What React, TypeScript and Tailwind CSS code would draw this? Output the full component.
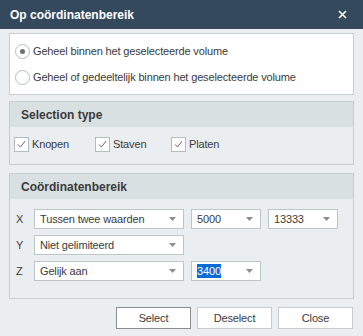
import React from "react";

const font = { fontFamily: '"Liberation Sans", Arial, sans-serif' };

const txt = "text-[11px] tracking-[-0.15px] text-[#3b3b3b]";

function Radio({ checked, label }: { checked?: boolean; label: string }) {
  return (
    <div className="flex items-center h-[26px]">
      <span className="w-[15px] h-[15px] rounded-full border border-[#b4bcc0] bg-white flex items-center justify-center ml-[5px]">
        {checked && <span className="w-[5px] h-[5px] rounded-full bg-[#6f6f6f]" />}
      </span>
      <span className={`ml-[3px] ${txt}`}>{label}</span>
    </div>
  );
}

function Check({ label, className }: { label: string; className?: string }) {
  return (
    <div className={`flex items-center ${className ?? ""}`}>
      <span className="w-[15px] h-[15px] border border-[#b4bcc0] bg-white flex items-center justify-center">
        <svg width="9" height="8" viewBox="0 0 9 8">
          <path d="M1 4.5 L3.5 7 L8 1" fill="none" stroke="#6b6b6b" strokeWidth="1" />
        </svg>
      </span>
      <span className={`ml-[3px] ${txt}`}>{label}</span>
    </div>
  );
}

function Dropdown({
  value,
  width,
  selected,
}: {
  value: string;
  width: string;
  selected?: boolean;
}) {
  return (
    <div
      className={`${width} h-[20px] border border-[#bcc6c9] bg-white flex items-center justify-between pl-[5px] pr-[7px]`}
    >
      {selected ? (
        <span className="text-[11px] tracking-[-0.15px] leading-[14px] bg-[#0a6ad6] text-white">{value}</span>
      ) : (
        <span className={txt}>{value}</span>
      )}
      <svg width="7" height="4" viewBox="0 0 7 4">
        <path d="M0 0 H7 L3.5 4 Z" fill="#8a8f92" />
      </svg>
    </div>
  );
}

function Row({ label, children }: { label: string; children: React.ReactNode }) {
  return (
    <div className="flex items-center gap-[7px]">
      <span className={`w-[17px] pl-[6px] ${txt}`}>{label}</span>
      {children}
    </div>
  );
}

export default function App() {
  return (
    <div className="w-[363px] h-[336px] bg-[#ebeef0] flex flex-col" style={font}>
      {/* Title bar */}
      <div className="h-[29px] bg-[#35495d] flex items-center justify-between pl-[10px] pr-[16px]">
        <span className="text-white font-bold text-[12px]">Op coördinatenbereik</span>
        <svg width="9" height="9" viewBox="0 0 9 9">
          <path d="M1 1 L8 8 M8 1 L1 8" stroke="white" strokeWidth="1.6" />
        </svg>
      </div>

      <div className="px-[9px] flex flex-col">
        {/* Radio group */}
        <div className="mt-[4px] h-[62px] border border-[#c5cdd0] bg-white flex flex-col justify-center">
          <Radio checked label="Geheel binnen het geselecteerde volume" />
          <Radio label="Geheel of gedeeltelijk binnen het geselecteerde volume" />
        </div>

        {/* Selection type */}
        <div className="mt-[6px] h-[64px] border border-[#c5cdd0] flex flex-col">
          <div className="h-[25px] bg-[#d9e0e2] flex items-center pl-[11px]">
            <span className="font-bold text-[12px] text-[#3b3b3b]">Selection type</span>
          </div>
          <div className="flex items-center pl-[4px] mt-[9px]">
            <Check label="Knopen" className="w-[81px]" />
            <Check label="Staven" className="w-[76px]" />
            <Check label="Platen" />
          </div>
        </div>

        {/* Coordinate range */}
        <div className="mt-[8px] h-[126px] border border-[#c5cdd0] flex flex-col">
          <div className="h-[25px] bg-[#d9e0e2] flex items-center pl-[11px]">
            <span className="font-bold text-[12px] text-[#3b3b3b]">Coördinatenbereik</span>
          </div>
          <div className="flex flex-col gap-[6px] mt-[10px]">
            <Row label="X">
              <Dropdown value="Tussen twee waarden" width="w-[150px]" />
              <Dropdown value="5000" width="w-[70px]" />
              <Dropdown value="13333" width="w-[70px]" />
            </Row>
            <Row label="Y">
              <Dropdown value="Niet gelimiteerd" width="w-[150px]" />
            </Row>
            <Row label="Z">
              <Dropdown value="Gelijk aan" width="w-[150px]" />
              <Dropdown value="3400" width="w-[70px]" selected />
            </Row>
          </div>
        </div>

        {/* Buttons */}
        <div className="mt-[8px] flex justify-end gap-[6px] pr-[1px]">
          <button className={`w-[75px] h-[22px] border border-[#8c8c8c] bg-white ${txt}`}>
            Select
          </button>
          <button className={`w-[75px] h-[22px] border border-[#c5cdd0] bg-white ${txt}`}>
            Deselect
          </button>
          <button className={`w-[75px] h-[22px] border border-[#c5cdd0] bg-white ${txt}`}>
            Close
          </button>
        </div>
      </div>
    </div>
  );
}
